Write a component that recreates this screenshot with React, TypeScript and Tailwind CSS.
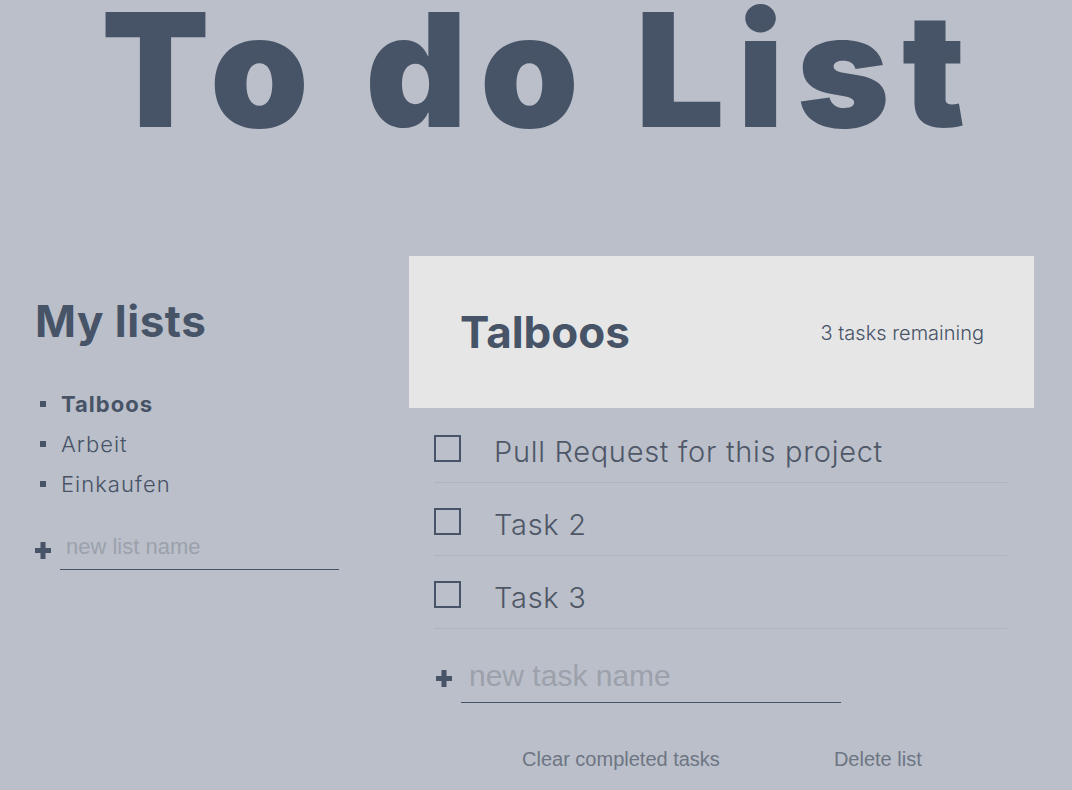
import { useState } from 'react';

type Task = { id: number; name: string; done: boolean };

const PlusIcon = ({ className }: { className?: string }) => (
  <svg viewBox="0 0 16 17" className={className} fill="#475366">
    <rect x="5.5" y="0" width="5" height="17" />
    <rect x="0" y="6" width="16" height="5" />
  </svg>
);

const App = () => {
  const lists = ['Talboos', 'Arbeit', 'Einkaufen'];
  const [tasks, setTasks] = useState<Task[]>([
    { id: 1, name: 'Pull Request for this project', done: false },
    { id: 2, name: 'Task 2', done: false },
    { id: 3, name: 'Task 3', done: false },
  ]);
  const remaining = tasks.filter((t) => !t.done).length;

  return (
    <div className="min-h-screen bg-[#babfca] text-[#475366] font-['Inter',sans-serif] overflow-hidden">
      {/* big heading */}
      <h1 className="text-[158px] font-black leading-[139px] text-center pl-[7px] tracking-[12.6px]">
        To do List
      </h1>

      <div className="flex mt-[117px]">
        {/* ── sidebar ── */}
        <aside className="w-[409px] pl-[35px] pt-[43px]">
          <h2 className="text-[44px] font-bold leading-none tracking-[0.5px]">My lists</h2>
          <ul className="mt-[41px]">
            {lists.map((l, i) => (
              <li key={l} className="flex items-center h-[40px] text-[22px] tracking-[1px]">
                <span className="w-[6px] h-[6px] bg-[#475366] ml-[5px] mr-[15px]" />
                <span className={i === 0 ? 'font-bold' : 'font-light'}>{l}</span>
              </li>
            ))}
          </ul>
          <form className="flex items-center mt-[31px]">
            <PlusIcon className="w-[16px] h-[17px] mr-[9px] mb-[4px]" />
            <input
              type="text"
              placeholder="new list name"
              className="w-[279px] h-[35px] pb-[10px] pl-[6px] border-b border-[#475366] bg-transparent outline-none text-[22px] font-['Liberation_Sans',sans-serif] placeholder:text-[#9ca1ab]"
            />
          </form>
        </aside>

        {/* ── current list ── */}
        <section className="w-[625px]">
          <div className="h-[152px] bg-[#e6e6e6] flex items-center justify-between pl-[51px] pr-[50px]">
            <h2 className="text-[44px] font-bold leading-none">Talboos</h2>
            <p className="text-[20px] font-light mt-[2px]">{remaining} tasks remaining</p>
          </div>

          <ul className="pt-[2px] pl-[25px] pr-[27px]">
            {tasks.map((t) => (
              <li key={t.id} className="flex items-center h-[73px] border-b border-[#aeb3be]">
                <button
                  onClick={() =>
                    setTasks((prev) => prev.map((x) => (x.id === t.id ? { ...x, done: !x.done } : x)))
                  }
                  className="w-[27px] h-[27px] border-2 border-[#475366] mt-[4px] shrink-0"
                />
                <span className="ml-[33px] pt-[10px] text-[29px] tracking-[0.7px] font-light leading-none text-[#4f5767]">
                  {t.name}
                </span>
              </li>
            ))}
          </ul>

          <form className="flex items-center pl-[27px] mt-[29px]">
            <PlusIcon className="w-[16px] h-[17px] mr-[9px] mb-[4px]" />
            <input
              type="text"
              placeholder="new task name"
              className="w-[380px] h-[45px] pb-[10px] pl-[8px] border-b border-[#475366] bg-transparent outline-none text-[30px] font-['Liberation_Sans',sans-serif] placeholder:text-[#9ca1ab]"
            />
          </form>

          <div className="flex pl-[113px] gap-[114px] mt-[46px] font-['Liberation_Sans',sans-serif] text-[20px] leading-none text-[#6e7583]">
            <button onClick={() => setTasks((prev) => prev.filter((x) => !x.done))}>Clear completed tasks</button>
            <button>Delete list</button>
          </div>
        </section>
      </div>
    </div>
  );
};

export default App;
